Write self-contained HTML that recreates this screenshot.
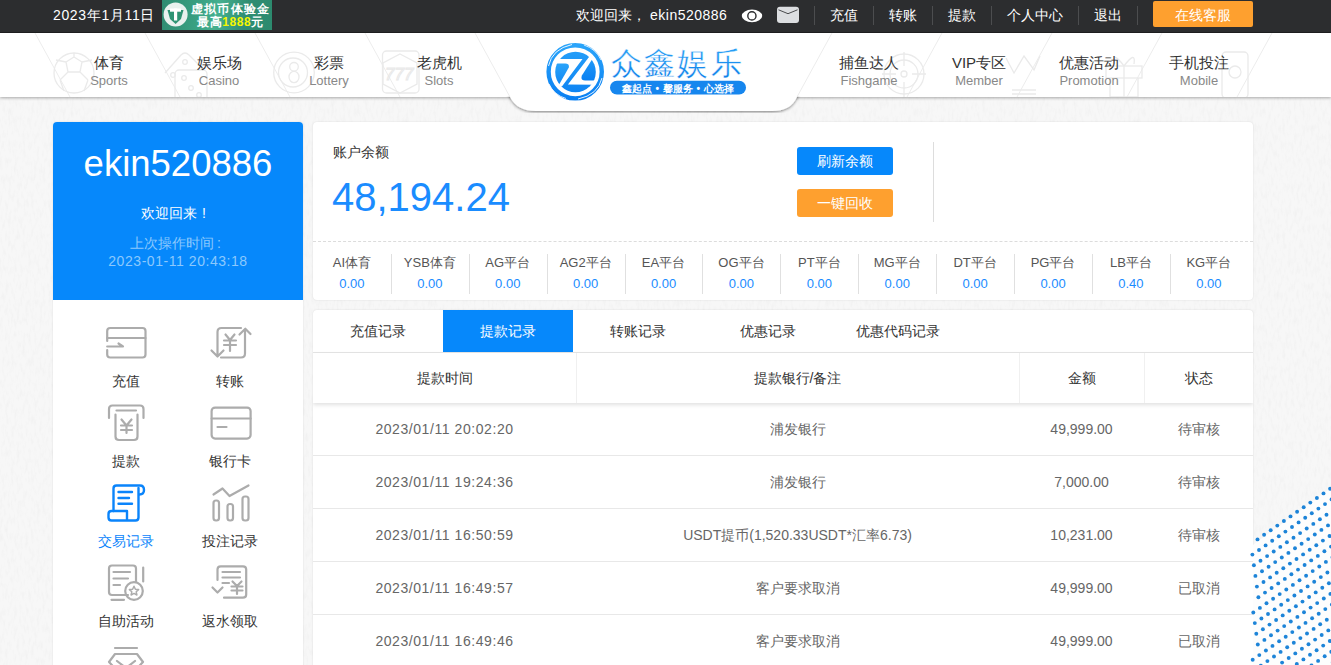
<!DOCTYPE html>
<html><head><meta charset="utf-8">
<style>
*{box-sizing:border-box;margin:0;padding:0}
html,body{width:1331px;height:665px;overflow:hidden}
body{position:relative;background:#f7f7f7;font-family:"Liberation Sans",sans-serif;color:#333}
.abs{position:absolute}
.t{position:absolute;white-space:nowrap;line-height:1}
.c{position:absolute;white-space:nowrap;line-height:1;text-align:center}
#top{position:absolute;left:0;top:0;width:1331px;height:33px;background:#2c2d2f;border-bottom:1px solid #1f2021}
#top .t{color:#fff;font-size:14px}
.sep{position:absolute;top:6px;width:1px;height:19px;background:#4c4d4f}
#kf{position:absolute;left:1153px;top:1px;width:100px;height:26px;background:#fea02f;border-radius:2px}
#nav{position:absolute;left:0;top:33px;width:1331px;height:64px;background:#fff;box-shadow:0 1px 3px rgba(0,0,0,.33)}
.nz{color:#333;font-size:15px}
.ne{color:#888;font-size:13px}
#side{position:absolute;left:53px;top:122px;width:250px;height:580px;background:#fff;border-radius:4px;overflow:hidden;box-shadow:0 0 2px rgba(0,0,0,.12)}
#sidehead{position:absolute;left:0;top:0;width:250px;height:178px;background:#0688fb}
.sl{font-size:14px;color:#333}
.panel{position:absolute;background:#fff;border-radius:4px;box-shadow:0 0 2px rgba(0,0,0,.12)}
.pn{font-size:13px;color:#555}
.pv{font-size:13px;color:#1a8cff}
.vs{position:absolute;top:132px;width:1px;height:40px;background:#ddd}
.tab{font-size:14px;color:#333}
.th{font-size:14px;color:#333}
.td{font-size:14px;color:#666}
.rowline{position:absolute;left:0;width:940px;height:1px;background:#e8e8e8}
</style></head>
<body>
<!-- BG TEXTURE -->
<svg class="abs" style="left:0;top:0" width="1331" height="665">
  <filter id="noise" x="0" y="0" width="100%" height="100%">
    <feTurbulence type="fractalNoise" baseFrequency="0.35 0.12" numOctaves="2" seed="7" result="n"/>
    <feColorMatrix in="n" type="matrix" values="0 0 0 0 0.5  0 0 0 0 0.5  0 0 0 0 0.5  1.6 0 0 0 -0.72"/>
  </filter>
  <rect x="0" y="0" width="1331" height="665" filter="url(#noise)" opacity="0.13"/>
</svg>
<!-- TOP BAR -->
<div id="top">
  <div class="t" style="left:53px;top:8px;letter-spacing:0.65px">2023年1月11日</div>
  <div class="abs" style="left:162px;top:0;width:110px;height:30px;background:linear-gradient(100deg,#2e8a70 0%,#3aa283 35%,#45b08f 50%,#2f8d72 75%,#2c8a6e 100%)"></div>
  <svg class="abs" style="left:162px;top:0" width="110" height="30" viewBox="0 0 110 30">
    <circle cx="13.6" cy="14.6" r="12" fill="#e9f1ee"/>
    <path d="M5.5,10 L21.5,10 L19,19 L13.6,24 L8,19 Z" fill="#2f9474"/>
    <rect x="8" y="8.5" width="11" height="3.2" fill="#fff"/>
    <rect x="12" y="8.5" width="3.2" height="12" fill="#fff"/>
    <text x="29" y="12.5" font-size="12" font-weight="bold" fill="#fff" style="letter-spacing:1.2px">虚拟币体验金</text>
    <text x="35" y="26" font-size="12" font-weight="bold" fill="#fff" style="letter-spacing:0.6px">最高<tspan fill="#f5f500">1888</tspan>元</text>
  </svg>
  <div class="t" style="left:576px;top:8px">欢迎回来，</div>
  <div class="t" style="left:650px;top:8px;letter-spacing:0.5px">ekin520886</div>
  <svg class="abs" style="left:730px;top:0px" width="80" height="33" viewBox="730 0 80 33">
    <ellipse cx="752" cy="15.9" rx="10.2" ry="6.3" fill="#fff"/>
    <circle cx="751.9" cy="15.9" r="4.1" fill="none" stroke="#2c2d2f" stroke-width="1.4"/>
    <rect x="777" y="6.8" width="22" height="16.3" rx="3" fill="#dcdee1"/>
    <path d="M778.5,9.8 L788,13.7 L797.5,9.8" fill="none" stroke="#3a3b3d" stroke-width="0.9"/>
  </svg>
  <div class="sep" style="left:814px"></div>
  <div class="t" style="left:830px;top:8px">充值</div>
  <div class="sep" style="left:873px"></div>
  <div class="t" style="left:889px;top:8px">转账</div>
  <div class="sep" style="left:932px"></div>
  <div class="t" style="left:948px;top:8px">提款</div>
  <div class="sep" style="left:991px"></div>
  <div class="t" style="left:1007px;top:8px">个人中心</div>
  <div class="sep" style="left:1078px"></div>
  <div class="t" style="left:1094px;top:8px">退出</div>
  <div class="sep" style="left:1137px"></div>
  <div id="kf"></div>
  <div class="t" style="left:1175px;top:8px">在线客服</div>
</div>

<!-- NAV -->
<div id="nav"></div>
<svg class="abs" style="left:0;top:33px" width="1331" height="80" viewBox="0 33 1331 80">
  <defs>
    <filter id="tabsh" x="-10%" y="-10%" width="120%" height="140%">
      <feGaussianBlur in="SourceAlpha" stdDeviation="1.5"/>
      <feOffset dy="1" result="b"/>
      <feComponentTransfer><feFuncA type="linear" slope="0.5"/></feComponentTransfer>
      <feMerge><feMergeNode/><feMergeNode in="SourceGraphic"/></feMerge>
    </filter>
  </defs>
  <!-- diagonal lines left -->
  <g stroke="#ececec" stroke-width="1">
    <line x1="35" y1="33" x2="70" y2="97"/>
    <line x1="145" y1="33" x2="180" y2="97"/>
    <line x1="255" y1="33" x2="290" y2="97"/>
    <line x1="365" y1="33" x2="400" y2="97"/>
    <line x1="475" y1="33" x2="510" y2="97"/>
    <line x1="832" y1="33" x2="797" y2="97"/>
    <line x1="942" y1="33" x2="907" y2="97"/>
    <line x1="1052" y1="33" x2="1017" y2="97"/>
    <line x1="1162" y1="33" x2="1127" y2="97"/>
    <line x1="1272" y1="33" x2="1237" y2="97"/>
  </g>
  <!-- logo tab -->
  <clipPath id="tabclip"><rect x="0" y="96.5" width="1331" height="30"/></clipPath>
  <g clip-path="url(#tabclip)"><path filter="url(#tabsh)" d="M475,20 L510,97 Q517,111 536,111 L772,111 Q791,111 797,97 L832,20 Z" fill="#fff"/></g>
  <!-- faint icons -->
  <clipPath id="navclip"><rect x="0" y="33" width="1331" height="64"/></clipPath>
  <g fill="none" stroke="#eaeaea" stroke-width="1.3" clip-path="url(#navclip)">
    <!-- soccer ball -->
    <circle cx="74" cy="73" r="20"/>
    <path d="M66,62 L74,57 L82,62 L80,72 L68,72 Z M74,57 V53 M82,62 L92,60 M80,72 L88,80 M68,72 L60,80 M66,62 L56,60 M60,80 L64,91 M88,80 L84,91"/>
    <!-- dice -->
    <path d="M165,73 L181,55 Q185,51 189,55 L203,69" />
    <rect x="175" y="70" width="32" height="30" rx="4"/>
    <circle cx="185" cy="62" r="2.3"/><circle cx="173" cy="75" r="2.3"/><circle cx="184" cy="78" r="2.3"/>
    <circle cx="191" cy="88" r="2.3"/><circle cx="199" cy="95" r="2.3"/>
    <!-- 8 ball -->
    <circle cx="294" cy="72.5" r="20.3"/>
    <circle cx="293" cy="72.5" r="14.5"/>
    <ellipse cx="294" cy="66.8" rx="4.3" ry="4.3"/>
    <ellipse cx="294" cy="77" rx="5" ry="5.6"/>
    <!-- slot -->
    <rect x="382.5" y="51" width="36.5" height="42" rx="4"/>
    <path d="M400,54 L417,63 L417,84 L400,93 L383,84 L383,63 Z"/>
    <text x="385" y="80" font-size="17" font-style="italic" fill="none" stroke="#e8e8e8" stroke-width="1">777</text>
    <!-- crosshair -->
    <circle cx="904" cy="74" r="20"/>
    <circle cx="904" cy="74" r="14"/>
    <circle cx="904" cy="74" r="3"/>
    <path d="M904,52 V66 M904,82 V98 M882,74 H896 M912,74 H926"/>
    <!-- crown -->
    <path d="M1006,58 L1014,73 L1024,56 L1034,70 L1040,56 M1012,94 H1036 M1012,90 H1036 M1014,98 H1034"/>
    <!-- gift -->
    <rect x="1106" y="66" width="36" height="12"/>
    <path d="M1110,78 V97 H1138 V78 M1124,66 V97 M1124,66 Q1112,50 1114,64 M1124,66 Q1136,50 1134,64"/>
    <!-- phone -->
    <rect x="1222" y="52" width="26" height="46" rx="4"/>
    <circle cx="1235" cy="72" r="6"/>
  </g>
  <!-- logo -->
  <defs>
    <linearGradient id="lg" x1="0" y1="0" x2="0" y2="1">
      <stop offset="0" stop-color="#2aa4fa"/><stop offset="1" stop-color="#0a80f2"/>
    </linearGradient>
    <linearGradient id="lg2" x1="0" y1="0" x2="0" y2="1">
      <stop offset="0" stop-color="#2aa2f6"/><stop offset="1" stop-color="#0a7de9"/>
    </linearGradient>
    <clipPath id="disc"><circle cx="575.5" cy="72" r="20.3"/></clipPath>
  </defs>
  <g>
    <circle cx="575.2" cy="71.8" r="26.6" fill="none" stroke="url(#lg)" stroke-width="4.4"/>
    <path d="M548.5,66 Q552,49 572,44.5" fill="none" stroke="#fff" stroke-width="0.9"/>
    <path d="M584,45 Q596,49 601,60" fill="none" stroke="#fff" stroke-width="0.8"/>
    <path d="M602,78 Q598,95 578,99" fill="none" stroke="#fff" stroke-width="0.9"/>
    <path d="M566,98.5 Q554,95 549,84" fill="none" stroke="#fff" stroke-width="0.8"/>
    <g clip-path="url(#disc)" fill="url(#lg)">
      <path d="M540,40 H610 V53.5 L589.4,56.4 L567.9,84.4 L610,84.9 V100 H540 V87 L561.9,86.6 L582.5,58.9 L540,58.9 Z"/>
      <path d="M540,63.6 H565.3 Q569.6,63.6 568.8,67.6 L556,90 H540 Z"/>
      <path d="M598.1,50 L581.9,75.4 Q580.2,80.5 585,80.5 H610 V50 Z"/>
    </g>
  </g>
  <text x="611" y="74" font-size="31" fill="url(#lg2)" stroke="#fff" stroke-width="0.35" style="letter-spacing:2.2px">众鑫娱乐</text>
  <rect x="610" y="80.8" width="136" height="13.7" rx="6.85" fill="#1686ee"/>
  <text x="678" y="91.6" font-size="10.2" font-weight="bold" fill="#fff" text-anchor="middle" style="letter-spacing:0.3px">鑫起点&#160;•&#160;馨服务&#160;•&#160;心选择</text>
</svg>
<div class="c nz" style="left:69px;top:55px;width:80px">体育</div>
<div class="c ne" style="left:69px;top:74px;width:80px">Sports</div>
<div class="c nz" style="left:179px;top:55px;width:80px">娱乐场</div>
<div class="c ne" style="left:179px;top:74px;width:80px">Casino</div>
<div class="c nz" style="left:289px;top:55px;width:80px">彩票</div>
<div class="c ne" style="left:289px;top:74px;width:80px">Lottery</div>
<div class="c nz" style="left:399px;top:55px;width:80px">老虎机</div>
<div class="c ne" style="left:399px;top:74px;width:80px">Slots</div>
<div class="c nz" style="left:829px;top:55px;width:80px">捕鱼达人</div>
<div class="c ne" style="left:829px;top:74px;width:80px">Fishgame</div>
<div class="c nz" style="left:939px;top:55px;width:80px">VIP专区</div>
<div class="c ne" style="left:939px;top:74px;width:80px">Member</div>
<div class="c nz" style="left:1049px;top:55px;width:80px">优惠活动</div>
<div class="c ne" style="left:1049px;top:74px;width:80px">Promotion</div>
<div class="c nz" style="left:1159px;top:55px;width:80px">手机投注</div>
<div class="c ne" style="left:1159px;top:74px;width:80px">Mobile</div>
<!-- SIDEBAR -->
<div id="side">
  <div id="sidehead">
    <div class="c" style="left:0;top:24px;width:250px;font-size:36.5px;color:#fff">ekin520886</div>
    <div class="t" style="left:88px;top:84px;font-size:14px;color:#fff">欢迎回来<span style="margin-left:5px">!</span></div>
    <div class="t" style="left:77px;top:114px;font-size:14px;color:#8cc8fd">上次操作时间<span style="margin-left:3px">:</span></div>
    <div class="c" style="left:0;top:132px;width:250px;font-size:14px;color:#8cc8fd;letter-spacing:0.55px">2023-01-11 20:43:18</div>
  </div>
</div>
<svg class="abs" style="left:0;top:0" width="320" height="665" viewBox="0 0 320 665">
  <g fill="none" stroke="#acacac" stroke-width="2.2" stroke-linecap="round" stroke-linejoin="round">
    <!-- 充值 -->
    <path d="M107.2,341 V331 Q107.2,328 110.2,328 H142.5 Q145.5,328 145.5,331 V354.5 Q145.5,357.5 142.5,357.5 H110.2 Q107.2,357.5 107.2,354.5 V350"/>
    <path d="M107.2,338 H145.5"/>
    <path d="M107.2,346.5 H123 L118.5,343.5"/>
    <!-- 转账 -->
    <path d="M241,328 H221.5 Q217.5,328 217.5,332 V356 M211.5,350.5 L217.5,356.5 L223.5,350.5"/>
    <path d="M221,357.5 H241 Q245,357.5 245,353.5 V329 M239.5,334.5 L245.3,328.7 L250.5,334"/>
    <path d="M225.5,334.5 L230,340 L234.5,334.5 M224,340.5 H236 M224,345 H236 M230,340 V351"/>
    <!-- 提款 -->
    <path d="M109,418 V409 Q109,405.5 112.5,405.5 H140 Q143.5,405.5 143.5,409 V418"/>
    <path d="M116.5,410.5 H136"/>
    <path d="M115.5,414.5 V436.5 Q115.5,440 119,440 H134 Q137.5,440 137.5,436.5 V414.5"/>
    <path d="M121.5,419.5 L126.5,425.5 L131.5,419.5 M121,425.5 H132 M121,430 H132 M126.5,425.5 V433"/>
    <!-- 银行卡 -->
    <rect x="211.6" y="407.6" width="39" height="31" rx="3.5"/>
    <path d="M211.6,418.5 H250.6 M217.5,427 H226.5"/>
    <!-- 投注记录 -->
    <path d="M213.5,494.5 L222.5,488.5 L229.5,496 L248.5,485.5"/>
    <rect x="213.5" y="500.5" width="5.5" height="20" rx="2.5"/>
    <rect x="227.5" y="504" width="5.5" height="16.5" rx="2.5"/>
    <rect x="242.5" y="496.5" width="6" height="24" rx="2.5"/>
    <!-- 自助活动 -->
    <path d="M128,595 H112 Q109,595 109,592 V568.5 Q109,565.5 112,565.5 H133 Q136,565.5 136,568.5 V582"/>
    <path d="M113.5,572 H130 M113.5,578.5 H128 M113.5,585 H120"/>
    <path d="M143.2,567.5 V581.5 M111.5,599.8 H124"/>
    <circle cx="134" cy="591" r="8.8"/>
    <path d="M134,586.3 L135.4,589.3 L138.6,589.6 L136.2,591.8 L136.9,595 L134,593.4 L131.1,595 L131.8,591.8 L129.4,589.6 L132.6,589.3 Z" stroke-width="1.5"/>
    <!-- 返水领取 -->
    <path d="M217.5,580 V569.5 Q217.5,566.3 220.7,566.3 H243 Q246.2,566.3 246.2,569.5 V594.5 Q246.2,597.7 243,597.7 H224"/>
    <path d="M222.5,572 H240 M222.5,577.5 H240 M222.5,583 H229"/>
    <path d="M212.5,587.5 L217.5,592.5 L222.5,587.5"/>
    <path d="M232.5,581.5 L237,586 L241.5,581.5 M231.5,586.5 H242.5 M231.5,590.5 H242.5 M237,586 V594"/>
    <!-- 5th row diamond -->
    <path d="M115,648 H137 M115,654 H137 L143,662 L126,680 L109,662 Z M117,661 L126,668 L135,661"/>
  </g>
  <!-- 交易记录 blue -->
  <g fill="none" stroke="#0a84fb" stroke-width="2.4" stroke-linecap="round" stroke-linejoin="round">
    <path d="M113.5,511 V488.5 Q113.5,485.5 116.5,485.5 H140 Q144,485.5 144,490 Q144,494.5 139.5,494.5"/>
    <path d="M138.5,488 V517.5 Q138.5,520.5 135.5,520.5 H111.5 Q108.5,520.5 108.5,517.5 V514 Q108.5,511 111.5,511 H127 V520.5"/>
    <path d="M118.5,492 H132 M118.5,498 H129 M118.5,503.8 H132"/>
  </g>
  <div></div>
</svg>
<div class="c sl" style="left:86px;top:374px;width:80px">充值</div>
<div class="c sl" style="left:190px;top:374px;width:80px">转账</div>
<div class="c sl" style="left:86px;top:454px;width:80px">提款</div>
<div class="c sl" style="left:190px;top:454px;width:80px">银行卡</div>
<div class="c sl" style="left:86px;top:534px;width:80px;color:#0a84fb">交易记录</div>
<div class="c sl" style="left:190px;top:534px;width:80px">投注记录</div>
<div class="c sl" style="left:86px;top:614px;width:80px">自助活动</div>
<div class="c sl" style="left:190px;top:614px;width:80px">返水领取</div>
<!-- MAIN PANEL 1 -->
<div class="panel" style="left:313px;top:122px;width:940px;height:178px">
  <div class="t" style="left:20px;top:23px;font-size:14px;color:#333">账户余额</div>
  <div class="t" style="left:19px;top:55px;font-size:40px;color:#1a8cff">48,194.24</div>
  <div class="abs" style="left:484px;top:25px;width:96px;height:28px;background:#0688fb;border-radius:3px"></div>
  <div class="c" style="left:484px;top:32px;width:96px;font-size:14px;color:#fff">刷新余额</div>
  <div class="abs" style="left:484px;top:67px;width:96px;height:28px;background:#fea02f;border-radius:3px"></div>
  <div class="c" style="left:484px;top:74px;width:96px;font-size:14px;color:#fff">一键回收</div>
  <div class="abs" style="left:620px;top:20px;width:1px;height:80px;background:#ddd"></div>
  <div class="abs" style="left:0;top:119px;width:940px;height:0;border-top:1px dashed #dcdcdc"></div>
</div>
<div class="c pn" style="left:313.00px;top:256px;width:77.90px">AI体育</div><div class="c pv" style="left:313.00px;top:277px;width:77.90px">0.00</div><div class="c pn" style="left:390.90px;top:256px;width:77.90px">YSB体育</div><div class="c pv" style="left:390.90px;top:277px;width:77.90px">0.00</div><div class="abs" style="left:391px;top:254px;width:1px;height:40px;background:#e0e0e0"></div><div class="c pn" style="left:468.80px;top:256px;width:77.90px">AG平台</div><div class="c pv" style="left:468.80px;top:277px;width:77.90px">0.00</div><div class="abs" style="left:469px;top:254px;width:1px;height:40px;background:#e0e0e0"></div><div class="c pn" style="left:546.70px;top:256px;width:77.90px">AG2平台</div><div class="c pv" style="left:546.70px;top:277px;width:77.90px">0.00</div><div class="abs" style="left:547px;top:254px;width:1px;height:40px;background:#e0e0e0"></div><div class="c pn" style="left:624.60px;top:256px;width:77.90px">EA平台</div><div class="c pv" style="left:624.60px;top:277px;width:77.90px">0.00</div><div class="abs" style="left:625px;top:254px;width:1px;height:40px;background:#e0e0e0"></div><div class="c pn" style="left:702.50px;top:256px;width:77.90px">OG平台</div><div class="c pv" style="left:702.50px;top:277px;width:77.90px">0.00</div><div class="abs" style="left:702px;top:254px;width:1px;height:40px;background:#e0e0e0"></div><div class="c pn" style="left:780.40px;top:256px;width:77.90px">PT平台</div><div class="c pv" style="left:780.40px;top:277px;width:77.90px">0.00</div><div class="abs" style="left:780px;top:254px;width:1px;height:40px;background:#e0e0e0"></div><div class="c pn" style="left:858.30px;top:256px;width:77.90px">MG平台</div><div class="c pv" style="left:858.30px;top:277px;width:77.90px">0.00</div><div class="abs" style="left:858px;top:254px;width:1px;height:40px;background:#e0e0e0"></div><div class="c pn" style="left:936.20px;top:256px;width:77.90px">DT平台</div><div class="c pv" style="left:936.20px;top:277px;width:77.90px">0.00</div><div class="abs" style="left:936px;top:254px;width:1px;height:40px;background:#e0e0e0"></div><div class="c pn" style="left:1014.10px;top:256px;width:77.90px">PG平台</div><div class="c pv" style="left:1014.10px;top:277px;width:77.90px">0.00</div><div class="abs" style="left:1014px;top:254px;width:1px;height:40px;background:#e0e0e0"></div><div class="c pn" style="left:1092.00px;top:256px;width:77.90px">LB平台</div><div class="c pv" style="left:1092.00px;top:277px;width:77.90px">0.40</div><div class="abs" style="left:1092px;top:254px;width:1px;height:40px;background:#e0e0e0"></div><div class="c pn" style="left:1169.90px;top:256px;width:77.90px">KG平台</div><div class="c pv" style="left:1169.90px;top:277px;width:77.90px">0.00</div><div class="abs" style="left:1170px;top:254px;width:1px;height:40px;background:#e0e0e0"></div>

<!-- MAIN PANEL 2 -->
<div class="panel" style="left:313px;top:310px;width:940px;height:400px;overflow:hidden">
  <div class="abs" style="left:130px;top:0;width:130px;height:42px;background:#0688fb"></div>
  <div class="c tab" style="left:0;top:14px;width:130px">充值记录</div>
  <div class="c tab" style="left:130px;top:14px;width:130px;color:#fff">提款记录</div>
  <div class="c tab" style="left:260px;top:14px;width:130px">转账记录</div>
  <div class="c tab" style="left:390px;top:14px;width:130px">优惠记录</div>
  <div class="c tab" style="left:520px;top:14px;width:130px">优惠代码记录</div>
  <div class="abs" style="left:0;top:42px;width:940px;height:1px;background:#e5e5e5"></div>
  <!-- header -->
  <div class="abs" style="left:0;top:43px;width:940px;height:50px;background:#fff;box-shadow:0 2px 4px rgba(0,0,0,.12);z-index:1">
    <div class="abs" style="left:263px;top:0;width:1px;height:50px;background:#f0f0f0"></div>
    <div class="abs" style="left:706px;top:0;width:1px;height:50px;background:#f0f0f0"></div>
    <div class="abs" style="left:831px;top:0;width:1px;height:50px;background:#f0f0f0"></div>
    <div class="c th" style="left:0;top:18px;width:263px">提款时间</div>
    <div class="c th" style="left:263px;top:18px;width:443px">提款银行/备注</div>
    <div class="c th" style="left:706px;top:18px;width:125px">金额</div>
    <div class="c th" style="left:831px;top:18px;width:109px">状态</div>
  </div>
  <div class="rowline" style="top:145px"></div><div class="c td" style="left:0px;top:112px;width:263px;letter-spacing:0.57px;">2023/01/11 20:02:20</div><div class="c td" style="left:263px;top:112px;width:443px;">浦发银行</div><div class="c td" style="left:706px;top:112px;width:125px;">49,999.00</div><div class="c td" style="left:831px;top:112px;width:109px;">待审核</div><div class="rowline" style="top:198px"></div><div class="c td" style="left:0px;top:165px;width:263px;letter-spacing:0.57px;">2023/01/11 19:24:36</div><div class="c td" style="left:263px;top:165px;width:443px;">浦发银行</div><div class="c td" style="left:706px;top:165px;width:125px;">7,000.00</div><div class="c td" style="left:831px;top:165px;width:109px;">待审核</div><div class="rowline" style="top:251px"></div><div class="c td" style="left:0px;top:218px;width:263px;letter-spacing:0.57px;">2023/01/11 16:50:59</div><div class="c td" style="left:263px;top:218px;width:443px;">USDT提币(1,520.33USDT*汇率6.73)</div><div class="c td" style="left:706px;top:218px;width:125px;">10,231.00</div><div class="c td" style="left:831px;top:218px;width:109px;">待审核</div><div class="rowline" style="top:304px"></div><div class="c td" style="left:0px;top:271px;width:263px;letter-spacing:0.57px;">2023/01/11 16:49:57</div><div class="c td" style="left:263px;top:271px;width:443px;">客户要求取消</div><div class="c td" style="left:706px;top:271px;width:125px;">49,999.00</div><div class="c td" style="left:831px;top:271px;width:109px;">已取消</div><div class="rowline" style="top:357px"></div><div class="c td" style="left:0px;top:324px;width:263px;letter-spacing:0.57px;">2023/01/11 16:49:46</div><div class="c td" style="left:263px;top:324px;width:443px;">客户要求取消</div><div class="c td" style="left:706px;top:324px;width:125px;">49,999.00</div><div class="c td" style="left:831px;top:324px;width:109px;">已取消</div><div class="rowline" style="top:410px"></div><div class="c td" style="left:0px;top:377px;width:263px;letter-spacing:0.57px;">2023/01/11 16:49:30</div><div class="c td" style="left:263px;top:377px;width:443px;">客户要求取消</div><div class="c td" style="left:706px;top:377px;width:125px;">49,999.00</div><div class="c td" style="left:831px;top:377px;width:109px;">已取消</div>
</div>

<!-- halftone -->
<svg class="abs" style="left:0;top:0" width="1331" height="665" viewBox="0 0 1331 665">
  <path d="M1253,545 L1331,488 L1331,665 L1253,665 Z" fill="#fdfdfd"/>
  <g fill="#1d84d8"><circle cx="1252.7" cy="659.7" r="1.95"/><circle cx="1260.8" cy="665.7" r="1.95"/><circle cx="1259.3" cy="655.1" r="1.95"/><circle cx="1267.4" cy="661.1" r="1.95"/><circle cx="1275.5" cy="667.2" r="1.95"/><circle cx="1257.8" cy="644.5" r="1.95"/><circle cx="1265.9" cy="650.5" r="1.95"/><circle cx="1274.0" cy="656.5" r="1.95"/><circle cx="1282.1" cy="662.6" r="1.95"/><circle cx="1290.2" cy="668.6" r="1.95"/><circle cx="1256.3" cy="633.8" r="1.95"/><circle cx="1264.4" cy="639.9" r="1.95"/><circle cx="1272.5" cy="645.9" r="1.95"/><circle cx="1280.6" cy="651.9" r="1.95"/><circle cx="1288.7" cy="658.0" r="1.95"/><circle cx="1296.8" cy="664.0" r="1.95"/><circle cx="1254.8" cy="623.1" r="1.95"/><circle cx="1262.9" cy="629.2" r="1.95"/><circle cx="1271.0" cy="635.2" r="1.95"/><circle cx="1279.1" cy="641.3" r="1.95"/><circle cx="1287.2" cy="647.3" r="1.95"/><circle cx="1295.3" cy="653.4" r="1.95"/><circle cx="1303.4" cy="659.4" r="1.95"/><circle cx="1311.5" cy="665.5" r="1.95"/><circle cx="1253.3" cy="612.5" r="1.95"/><circle cx="1261.4" cy="618.5" r="1.95"/><circle cx="1269.5" cy="624.6" r="1.95"/><circle cx="1277.6" cy="630.6" r="1.95"/><circle cx="1285.7" cy="636.7" r="1.95"/><circle cx="1293.8" cy="642.7" r="1.95"/><circle cx="1301.9" cy="648.8" r="1.95"/><circle cx="1310.0" cy="654.8" r="1.95"/><circle cx="1318.1" cy="660.9" r="1.95"/><circle cx="1326.2" cy="666.9" r="1.95"/><circle cx="1259.9" cy="607.9" r="1.95"/><circle cx="1268.0" cy="614.0" r="1.95"/><circle cx="1276.1" cy="620.0" r="1.95"/><circle cx="1284.2" cy="626.1" r="1.95"/><circle cx="1292.3" cy="632.1" r="1.95"/><circle cx="1300.4" cy="638.1" r="1.95"/><circle cx="1308.5" cy="644.2" r="1.95"/><circle cx="1316.6" cy="650.2" r="1.95"/><circle cx="1324.7" cy="656.3" r="1.95"/><circle cx="1332.8" cy="662.4" r="1.95"/><circle cx="1258.4" cy="597.2" r="1.95"/><circle cx="1266.5" cy="603.3" r="1.95"/><circle cx="1274.6" cy="609.4" r="1.95"/><circle cx="1282.7" cy="615.4" r="1.95"/><circle cx="1290.8" cy="621.5" r="1.95"/><circle cx="1298.9" cy="627.5" r="1.95"/><circle cx="1307.0" cy="633.5" r="1.95"/><circle cx="1315.1" cy="639.6" r="1.95"/><circle cx="1323.2" cy="645.6" r="1.95"/><circle cx="1331.3" cy="651.7" r="1.95"/><circle cx="1256.9" cy="586.6" r="1.95"/><circle cx="1265.0" cy="592.6" r="1.95"/><circle cx="1273.1" cy="598.7" r="1.95"/><circle cx="1281.2" cy="604.8" r="1.95"/><circle cx="1289.3" cy="610.8" r="1.95"/><circle cx="1297.4" cy="616.9" r="1.95"/><circle cx="1305.5" cy="622.9" r="1.95"/><circle cx="1313.6" cy="628.9" r="1.95"/><circle cx="1321.7" cy="635.0" r="1.95"/><circle cx="1329.8" cy="641.0" r="1.95"/><circle cx="1255.4" cy="575.9" r="1.95"/><circle cx="1263.5" cy="582.0" r="1.95"/><circle cx="1271.6" cy="588.0" r="1.95"/><circle cx="1279.7" cy="594.1" r="1.95"/><circle cx="1287.8" cy="600.1" r="1.95"/><circle cx="1295.9" cy="606.2" r="1.95"/><circle cx="1304.0" cy="612.2" r="1.95"/><circle cx="1312.1" cy="618.3" r="1.95"/><circle cx="1320.2" cy="624.3" r="1.95"/><circle cx="1328.3" cy="630.4" r="1.95"/><circle cx="1253.9" cy="565.3" r="1.95"/><circle cx="1262.0" cy="571.3" r="1.95"/><circle cx="1270.1" cy="577.4" r="1.95"/><circle cx="1278.2" cy="583.4" r="1.95"/><circle cx="1286.3" cy="589.5" r="1.95"/><circle cx="1294.4" cy="595.5" r="1.95"/><circle cx="1302.5" cy="601.6" r="1.95"/><circle cx="1310.6" cy="607.6" r="1.95"/><circle cx="1318.7" cy="613.7" r="1.95"/><circle cx="1326.8" cy="619.7" r="1.95"/><circle cx="1334.9" cy="625.8" r="1.95"/><circle cx="1252.4" cy="554.6" r="1.95"/><circle cx="1260.5" cy="560.7" r="1.95"/><circle cx="1268.6" cy="566.8" r="1.95"/><circle cx="1276.7" cy="572.8" r="1.95"/><circle cx="1284.8" cy="578.9" r="1.95"/><circle cx="1292.9" cy="584.9" r="1.95"/><circle cx="1301.0" cy="591.0" r="1.95"/><circle cx="1309.1" cy="597.0" r="1.95"/><circle cx="1317.2" cy="603.1" r="1.95"/><circle cx="1325.3" cy="609.1" r="1.95"/><circle cx="1333.4" cy="615.1" r="1.95"/><circle cx="1259.0" cy="550.0" r="1.95"/><circle cx="1267.1" cy="556.1" r="1.95"/><circle cx="1275.2" cy="562.1" r="1.95"/><circle cx="1283.3" cy="568.2" r="1.95"/><circle cx="1291.4" cy="574.2" r="1.95"/><circle cx="1299.5" cy="580.3" r="1.95"/><circle cx="1307.6" cy="586.4" r="1.95"/><circle cx="1315.7" cy="592.4" r="1.95"/><circle cx="1323.8" cy="598.5" r="1.95"/><circle cx="1331.9" cy="604.5" r="1.95"/><circle cx="1257.5" cy="539.4" r="1.95"/><circle cx="1265.6" cy="545.4" r="1.95"/><circle cx="1273.7" cy="551.5" r="1.95"/><circle cx="1281.8" cy="557.5" r="1.95"/><circle cx="1289.9" cy="563.6" r="1.95"/><circle cx="1298.0" cy="569.6" r="1.95"/><circle cx="1306.1" cy="575.7" r="1.95"/><circle cx="1314.2" cy="581.8" r="1.95"/><circle cx="1322.3" cy="587.8" r="1.95"/><circle cx="1330.4" cy="593.9" r="1.95"/><circle cx="1264.1" cy="534.8" r="1.95"/><circle cx="1272.2" cy="540.8" r="1.95"/><circle cx="1280.3" cy="546.9" r="1.95"/><circle cx="1288.4" cy="552.9" r="1.95"/><circle cx="1296.5" cy="559.0" r="1.95"/><circle cx="1304.6" cy="565.0" r="1.95"/><circle cx="1312.7" cy="571.1" r="1.95"/><circle cx="1320.8" cy="577.1" r="1.95"/><circle cx="1328.9" cy="583.2" r="1.95"/><circle cx="1270.7" cy="530.2" r="1.95"/><circle cx="1278.8" cy="536.2" r="1.95"/><circle cx="1286.9" cy="542.3" r="1.95"/><circle cx="1295.0" cy="548.3" r="1.95"/><circle cx="1303.1" cy="554.4" r="1.95"/><circle cx="1311.2" cy="560.4" r="1.95"/><circle cx="1319.3" cy="566.5" r="1.95"/><circle cx="1327.4" cy="572.5" r="1.95"/><circle cx="1277.3" cy="525.6" r="1.95"/><circle cx="1285.4" cy="531.6" r="1.95"/><circle cx="1293.5" cy="537.7" r="1.95"/><circle cx="1301.6" cy="543.8" r="1.95"/><circle cx="1309.7" cy="549.8" r="1.95"/><circle cx="1317.8" cy="555.9" r="1.95"/><circle cx="1325.9" cy="561.9" r="1.95"/><circle cx="1334.0" cy="568.0" r="1.95"/><circle cx="1283.9" cy="521.0" r="1.95"/><circle cx="1292.0" cy="527.0" r="1.95"/><circle cx="1300.1" cy="533.1" r="1.95"/><circle cx="1308.2" cy="539.1" r="1.95"/><circle cx="1316.3" cy="545.2" r="1.95"/><circle cx="1324.4" cy="551.2" r="1.95"/><circle cx="1332.5" cy="557.3" r="1.95"/><circle cx="1290.5" cy="516.4" r="1.95"/><circle cx="1298.6" cy="522.4" r="1.95"/><circle cx="1306.7" cy="528.5" r="1.95"/><circle cx="1314.8" cy="534.5" r="1.95"/><circle cx="1322.9" cy="540.6" r="1.95"/><circle cx="1331.0" cy="546.6" r="1.95"/><circle cx="1297.1" cy="511.8" r="1.95"/><circle cx="1305.2" cy="517.8" r="1.95"/><circle cx="1313.3" cy="523.9" r="1.95"/><circle cx="1321.4" cy="529.9" r="1.95"/><circle cx="1329.5" cy="536.0" r="1.95"/><circle cx="1303.7" cy="507.2" r="1.95"/><circle cx="1311.8" cy="513.2" r="1.95"/><circle cx="1319.9" cy="519.3" r="1.95"/><circle cx="1328.0" cy="525.4" r="1.95"/><circle cx="1310.3" cy="502.6" r="1.95"/><circle cx="1318.4" cy="508.6" r="1.95"/><circle cx="1326.5" cy="514.7" r="1.95"/><circle cx="1334.6" cy="520.8" r="1.95"/><circle cx="1316.9" cy="498.0" r="1.95"/><circle cx="1325.0" cy="504.1" r="1.95"/><circle cx="1333.1" cy="510.1" r="1.95"/><circle cx="1323.5" cy="493.4" r="1.95"/><circle cx="1331.6" cy="499.4" r="1.95"/><circle cx="1330.1" cy="488.8" r="1.95"/></g>
</svg>
</body></html>
